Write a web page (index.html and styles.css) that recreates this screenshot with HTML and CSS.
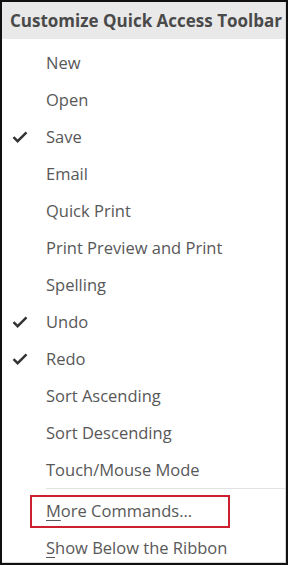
FILE: index.html
```html
<!DOCTYPE html>
<html>
<head>
<meta charset="utf-8">
<link rel="stylesheet" href="styles.css">
</head>
<body>
<div class="frame">
  <div class="menu">
    <div class="header">Customize Quick Access Toolbar</div>
    <ul class="items">
      <li class="item"><span class="check"></span><span class="label">New</span></li>
      <li class="item"><span class="check"></span><span class="label">Open</span></li>
      <li class="item checked"><span class="check"><svg viewBox="0 0 16 12" width="16" height="12"><path d="M1.5 6.2 L5.6 10.2 L14.5 1.3" fill="none" stroke="#333" stroke-width="2.4"/></svg></span><span class="label">Save</span></li>
      <li class="item"><span class="check"></span><span class="label">Email</span></li>
      <li class="item"><span class="check"></span><span class="label">Quick Print</span></li>
      <li class="item"><span class="check"></span><span class="label">Print Preview and Print</span></li>
      <li class="item"><span class="check"></span><span class="label">Spelling</span></li>
      <li class="item checked"><span class="check"><svg viewBox="0 0 16 12" width="16" height="12"><path d="M1.5 6.2 L5.6 10.2 L14.5 1.3" fill="none" stroke="#333" stroke-width="2.4"/></svg></span><span class="label">Undo</span></li>
      <li class="item checked"><span class="check"><svg viewBox="0 0 16 12" width="16" height="12"><path d="M1.5 6.2 L5.6 10.2 L14.5 1.3" fill="none" stroke="#333" stroke-width="2.4"/></svg></span><span class="label">Redo</span></li>
      <li class="item"><span class="check"></span><span class="label">Sort Ascending</span></li>
      <li class="item"><span class="check"></span><span class="label">Sort Descending</span></li>
      <li class="item"><span class="check"></span><span class="label">Touch/Mouse Mode</span></li>
    </ul>
    <div class="separator"></div>
    <ul class="items">
      <li class="item highlighted"><span class="check"></span><span class="label"><u>M</u>ore Commands...</span></li>
      <li class="item"><span class="check"></span><span class="label"><u>S</u>how Below the Ribbon</span></li>
    </ul>
  </div>
</div>
</body>
</html>
```

FILE: styles.css
```css
html, body {
  margin: 0;
  padding: 0;
  background: #fff;
}

.frame {
  width: 288px;
  height: 565px;
  box-sizing: border-box;
  border: 2px solid #111;
  overflow: hidden;
  background: #fff;
}

.menu {
  height: 100%;
  box-sizing: border-box;
  border-right: 1px solid #d6d6d6;
  border-bottom: 1px solid #d6d6d6;
  font-family: "Open Sans", "Noto Sans", sans-serif;
}

.header {
  height: 37px;
  background: #e9e9e9;
  color: #4a4a4a;
  font-weight: 700;
  font-size: 17px;
  line-height: 37px;
  padding-left: 8px;
  white-space: nowrap;
  overflow: hidden;
}

.items {
  list-style: none;
  margin: 0;
  padding: 0;
}

.items:first-of-type {
  padding-top: 5px;
}

.item {
  display: flex;
  align-items: center;
  height: 37px;
  color: #585858;
  font-size: 16.5px;
  white-space: nowrap;
}

.check {
  width: 44px;
  display: flex;
  justify-content: center;
  padding-right: 8px;
  box-sizing: border-box;
}

.check svg {
  display: block;
}

.label {
  line-height: 22px;
}

.separator {
  height: 1px;
  background: #e2e2e2;
  margin: 0 0 3px 44px;
}

.highlighted .label {
  position: relative;
}

.highlighted .label::after {
  content: "";
  position: absolute;
  left: -16px;
  right: -38px;
  top: -5px;
  bottom: -6px;
  border: 2px solid #cc2030;
}

.label u {
  text-decoration-thickness: 1px;
  text-underline-offset: 3px;
}
```
